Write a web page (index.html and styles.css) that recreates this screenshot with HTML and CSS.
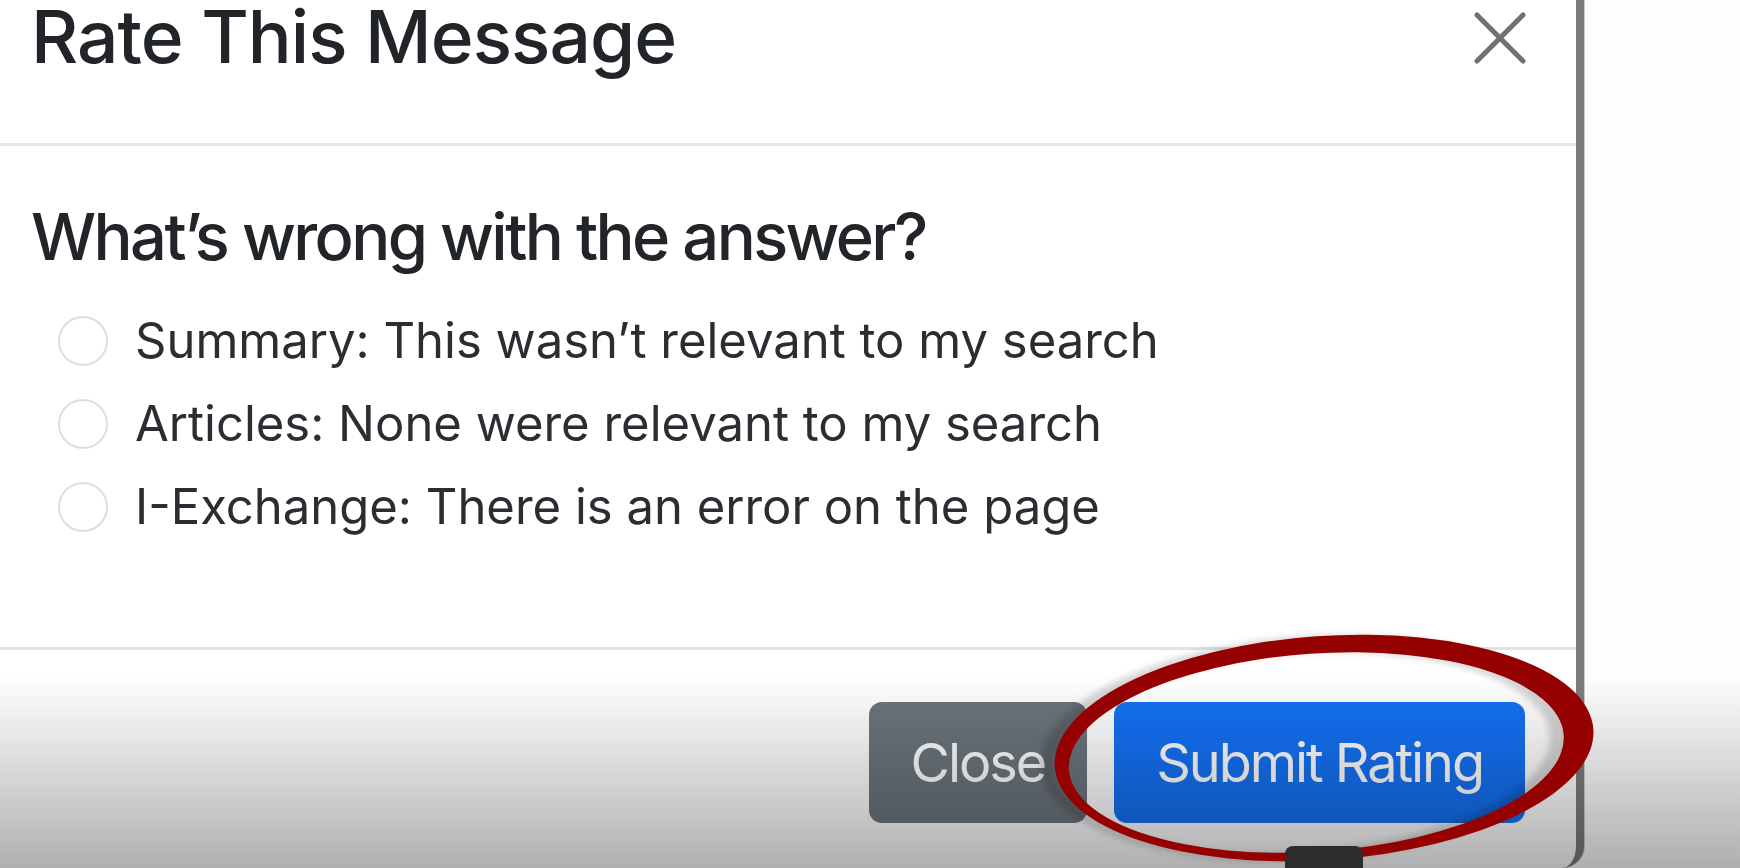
FILE: index.html
```html
<!DOCTYPE html>
<html lang="en">
<head>
<meta charset="utf-8">
<title>Rate This Message</title>
<link rel="stylesheet" href="styles.css">
</head>
<body>
<div class="screen">
  <div class="modal">
    <header class="modal-header">
      <h5 class="modal-title">Rate This Message</h5>
      <button class="btn-close" type="button" aria-label="Close">
        <svg viewBox="0 0 52 52" width="52" height="52" aria-hidden="true">
          <path d="M3 3 L49 49 M49 3 L3 49" />
        </svg>
      </button>
    </header>
    <div class="modal-body">
      <h6 class="question">What’s wrong with the answer?</h6>
      <label class="option"><input class="radio" type="radio" name="reason"><span>Summary: This wasn’t relevant to my search</span></label>
      <label class="option"><input class="radio" type="radio" name="reason"><span>Articles: None were relevant to my search</span></label>
      <label class="option"><input class="radio" type="radio" name="reason"><span>I-Exchange: There is an error on the page</span></label>
    </div>
    <footer class="modal-footer">
      <button class="btn btn-secondary" type="button">Close</button>
      <button class="btn btn-primary" type="button">Submit Rating</button>
    </footer>
  </div>
  <div class="shade"></div>
  <svg class="annotation" viewBox="0 0 1740 868" width="1740" height="868" aria-hidden="true">
    <g transform="rotate(-4 1324 748)">
      <path class="ring" fill-rule="evenodd"
        d="M1054 748 A270 112 0 1 0 1594 748 A270 112 0 1 0 1054 748 Z
           M1068 752 A248 99 0 1 0 1564 752 A248 99 0 1 0 1068 752 Z" />
    </g>
  </svg>
  <div class="handle"></div>
</div>
</body>
</html>
```

FILE: styles.css
```css
html, body {
  margin: 0;
  padding: 0;
}

.screen {
  position: relative;
  width: 1740px;
  height: 868px;
  overflow: hidden;
  background: #fdfdfd;
  font-family: Inter, "Liberation Sans", sans-serif;
  color: #212529;
}

/* dialog, cropped so only its right and bottom-right edges show */
.modal {
  width: 1576px;
  height: 868px;
  background: #fff;
  border-right: 8px solid #7c7c7c;
  border-bottom-right-radius: 22px;
  box-shadow: 1px 0 0 #cfcfcf;
  display: flex;
  flex-direction: column;
}

.modal-header {
  height: 143px;
  border-bottom: 3px solid #e6e6e6;
  display: flex;
  justify-content: space-between;
  align-items: flex-start;
  padding: 0 50px 0 31px;
}

.modal-title {
  margin: 0;
  font-size: 73px;
  line-height: 1;
  font-weight: 500;
  letter-spacing: -0.013em;
}

.btn-close {
  margin-top: 12px;
  padding: 0;
  border: 0;
  background: none;
  width: 52px;
  height: 52px;
}

.btn-close svg path {
  stroke: #717171;
  stroke-width: 5;
  stroke-linecap: round;
  fill: none;
}

.modal-body {
  padding: 58px 0 99px 31px;
}

.question {
  margin: 0 0 30px;
  font-size: 65px;
  line-height: 1;
  font-weight: 500;
  letter-spacing: -0.04em;
}

.option {
  display: flex;
  align-items: center;
  gap: 27px;
  height: 83px;
  padding-left: 27px;
  font-size: 49px;
  letter-spacing: 0;
  color: #2a2d31;
}

.radio {
  appearance: none;
  -webkit-appearance: none;
  flex: none;
  width: 50px;
  height: 50px;
  margin: 0;
  border: 2px solid #dedede;
  border-radius: 50%;
  background: #fff;
}

.modal-footer {
  border-top: 3px solid #dfe3e8;
  display: flex;
  justify-content: flex-end;
  gap: 27px;
  padding: 52px 51px 0 0;
}

.btn {
  height: 121px;
  padding: 0 42px;
  border: 0;
  border-radius: 13px;
  font-family: inherit;
  font-size: 54px;
  letter-spacing: -0.038em;
  color: #fff;
}

.btn-secondary {
  background: #6c757d;
}

.btn-primary {
  background: #1471f5;
}

/* darkening band along the bottom of the frame */
.shade {
  position: absolute;
  left: 0;
  right: 0;
  top: 676px;
  bottom: 0;
  background: linear-gradient(to bottom, rgba(0, 0, 0, 0), rgba(0, 0, 0, 0.31));
  pointer-events: none;
}

/* hand-drawn highlight around the submit button */
.annotation {
  position: absolute;
  left: 0;
  top: 0;
  pointer-events: none;
  filter: drop-shadow(-14px 0 3px rgba(0, 0, 0, 0.16));
}

.ring {
  fill: #950000;
}

.handle {
  position: absolute;
  left: 1285px;
  top: 846px;
  width: 78px;
  height: 30px;
  border-radius: 8px;
  background: #2c2c2c;
}
```
